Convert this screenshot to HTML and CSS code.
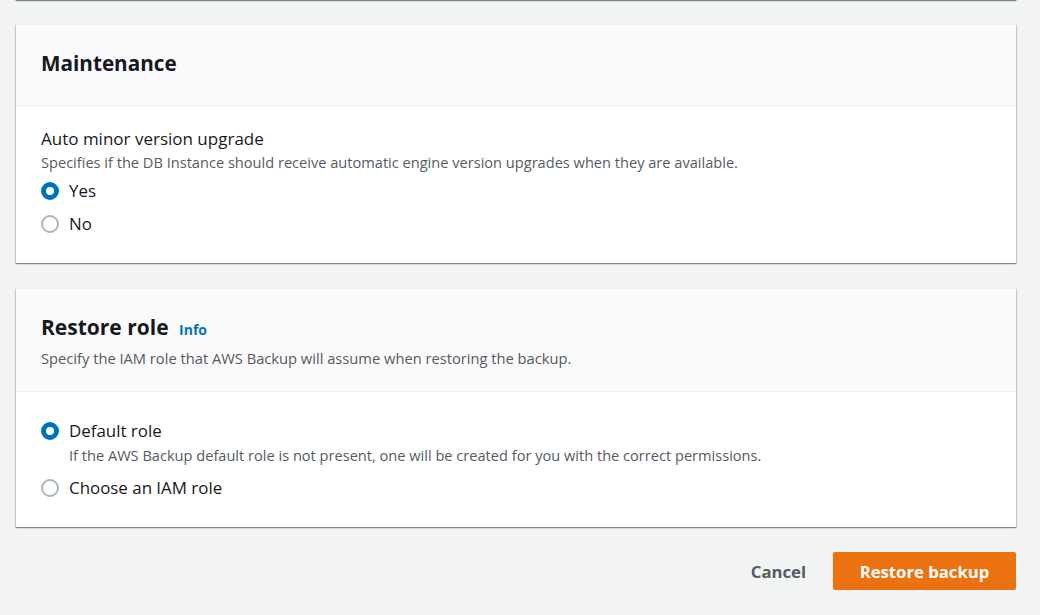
FILE: index.html
```html
<!DOCTYPE html>
<html lang="en">
<head>
<meta charset="utf-8">
<title>Restore backup</title>
<link rel="stylesheet" href="styles.css">
</head>
<body>
<div class="page">
  <div class="card card-stub"></div>

  <section class="card">
    <header class="card-header">
      <h2 class="card-title">Maintenance</h2>
    </header>
    <div class="card-body body-maint">
      <div class="field-label">Auto minor version upgrade</div>
      <div class="field-desc">Specifies if the DB Instance should receive automatic engine version upgrades when they are available.</div>
      <div class="radio-group">
        <label class="radio"><span class="radio-dot checked"></span><span class="radio-text">Yes</span></label>
        <label class="radio"><span class="radio-dot"></span><span class="radio-text">No</span></label>
      </div>
    </div>
  </section>

  <section class="card">
    <header class="card-header header-role">
      <h2 class="card-title title-role">Restore role <a class="info">Info</a></h2>
      <div class="header-desc">Specify the IAM role that AWS Backup will assume when restoring the backup.</div>
    </header>
    <div class="card-body body-role">
      <div class="radio-group group-role">
        <label class="radio">
          <span class="radio-dot checked"></span>
          <span class="radio-content">
            <span class="radio-text">Default role</span>
            <span class="radio-desc">If the AWS Backup default role is not present, one will be created for you with the correct permissions.</span>
          </span>
        </label>
        <label class="radio"><span class="radio-dot"></span><span class="radio-text">Choose an IAM role</span></label>
      </div>
    </div>
  </section>

  <div class="actions">
    <button class="btn btn-link">Cancel</button>
    <button class="btn btn-primary">Restore backup</button>
  </div>
</div>
</body>
</html>
```
FILE: styles.css
```css
* { box-sizing: border-box; }
html, body {
  margin: 0;
  padding: 0;
  background: #f2f3f3;
  font-family: "Open Sans", "Noto Sans", sans-serif;
  color: #16191f;
}
.page {
  width: 1000px;
  margin-left: 16px;
  display: flex;
  flex-direction: column;
}
.card {
  background: #fff;
  border-top: 1px solid #eaeded;
  box-shadow: 0 1px 1px 0 rgba(0,28,36,.3), 1px 1px 1px 0 rgba(0,28,36,.15), -1px 1px 1px 0 rgba(0,28,36,.15);
  margin-bottom: 25px;
}
.card-stub {
  height: 10px;
  margin-top: -10px;
  margin-bottom: 24px;
}
.card-header {
  background: #fafafa;
  border-bottom: 1px solid #eaeded;
  padding: 23px 25px 0;
  height: 81px;
}
.header-role {
  height: 103px;
  padding-top: 23px;
}
.card-title {
  margin: 0;
  font-size: 20.7px;
  line-height: 30px;
  font-weight: 700;
  color: #16191f;
}
.title-role {
  font-size: 21px;
}
.info {
  font-size: 14px;
  color: #0073bb;
  font-weight: 700;
  margin-left: 5px;
  text-decoration: none;
}
.header-desc {
  font-size: 14.7px;
  line-height: 22px;
  color: #545b64;
  margin-top: 2px;
}
.card-body {
  padding: 22px 25px 28px;
}
.body-role {
  padding-top: 28px;
  padding-bottom: 28px;
}
.field-label {
  font-size: 17px;
  line-height: 22px;
}
.field-desc {
  font-size: 14.6px;
  line-height: 20px;
  color: #545b64;
  margin-top: 2px;
}
.radio-group {
  display: flex;
  flex-direction: column;
  gap: 11px;
  margin-top: 8px;
}
.group-role {
  margin-top: 0;
  gap: 12px;
}
.radio {
  display: flex;
  align-items: flex-start;
  gap: 10px;
}
.radio-dot {
  flex: none;
  width: 18px;
  height: 18px;
  border-radius: 50%;
  border: 2px solid #aab7b8;
  margin-top: 2px;
  background: #fff;
}
.radio-dot.checked {
  border: 5px solid #0073bb;
}
.radio-content {
  display: flex;
  flex-direction: column;
}
.radio-text {
  font-size: 16.9px;
  line-height: 22px;
}
.radio-desc {
  font-size: 14.6px;
  line-height: 20px;
  color: #545b64;
  margin-top: 3px;
}
.actions {
  display: flex;
  justify-content: flex-end;
  align-items: center;
  gap: 19px;
}
.btn {
  font-family: inherit;
  font-size: 16.7px;
  font-weight: 700;
  border: none;
  cursor: pointer;
  height: 38px;
  border-radius: 2px;
}
.btn-link {
  background: transparent;
  color: #545b64;
  padding: 0 8px;
}
.btn-primary {
  background: #ec7211;
  color: #fff;
  width: 183px;
}
```
